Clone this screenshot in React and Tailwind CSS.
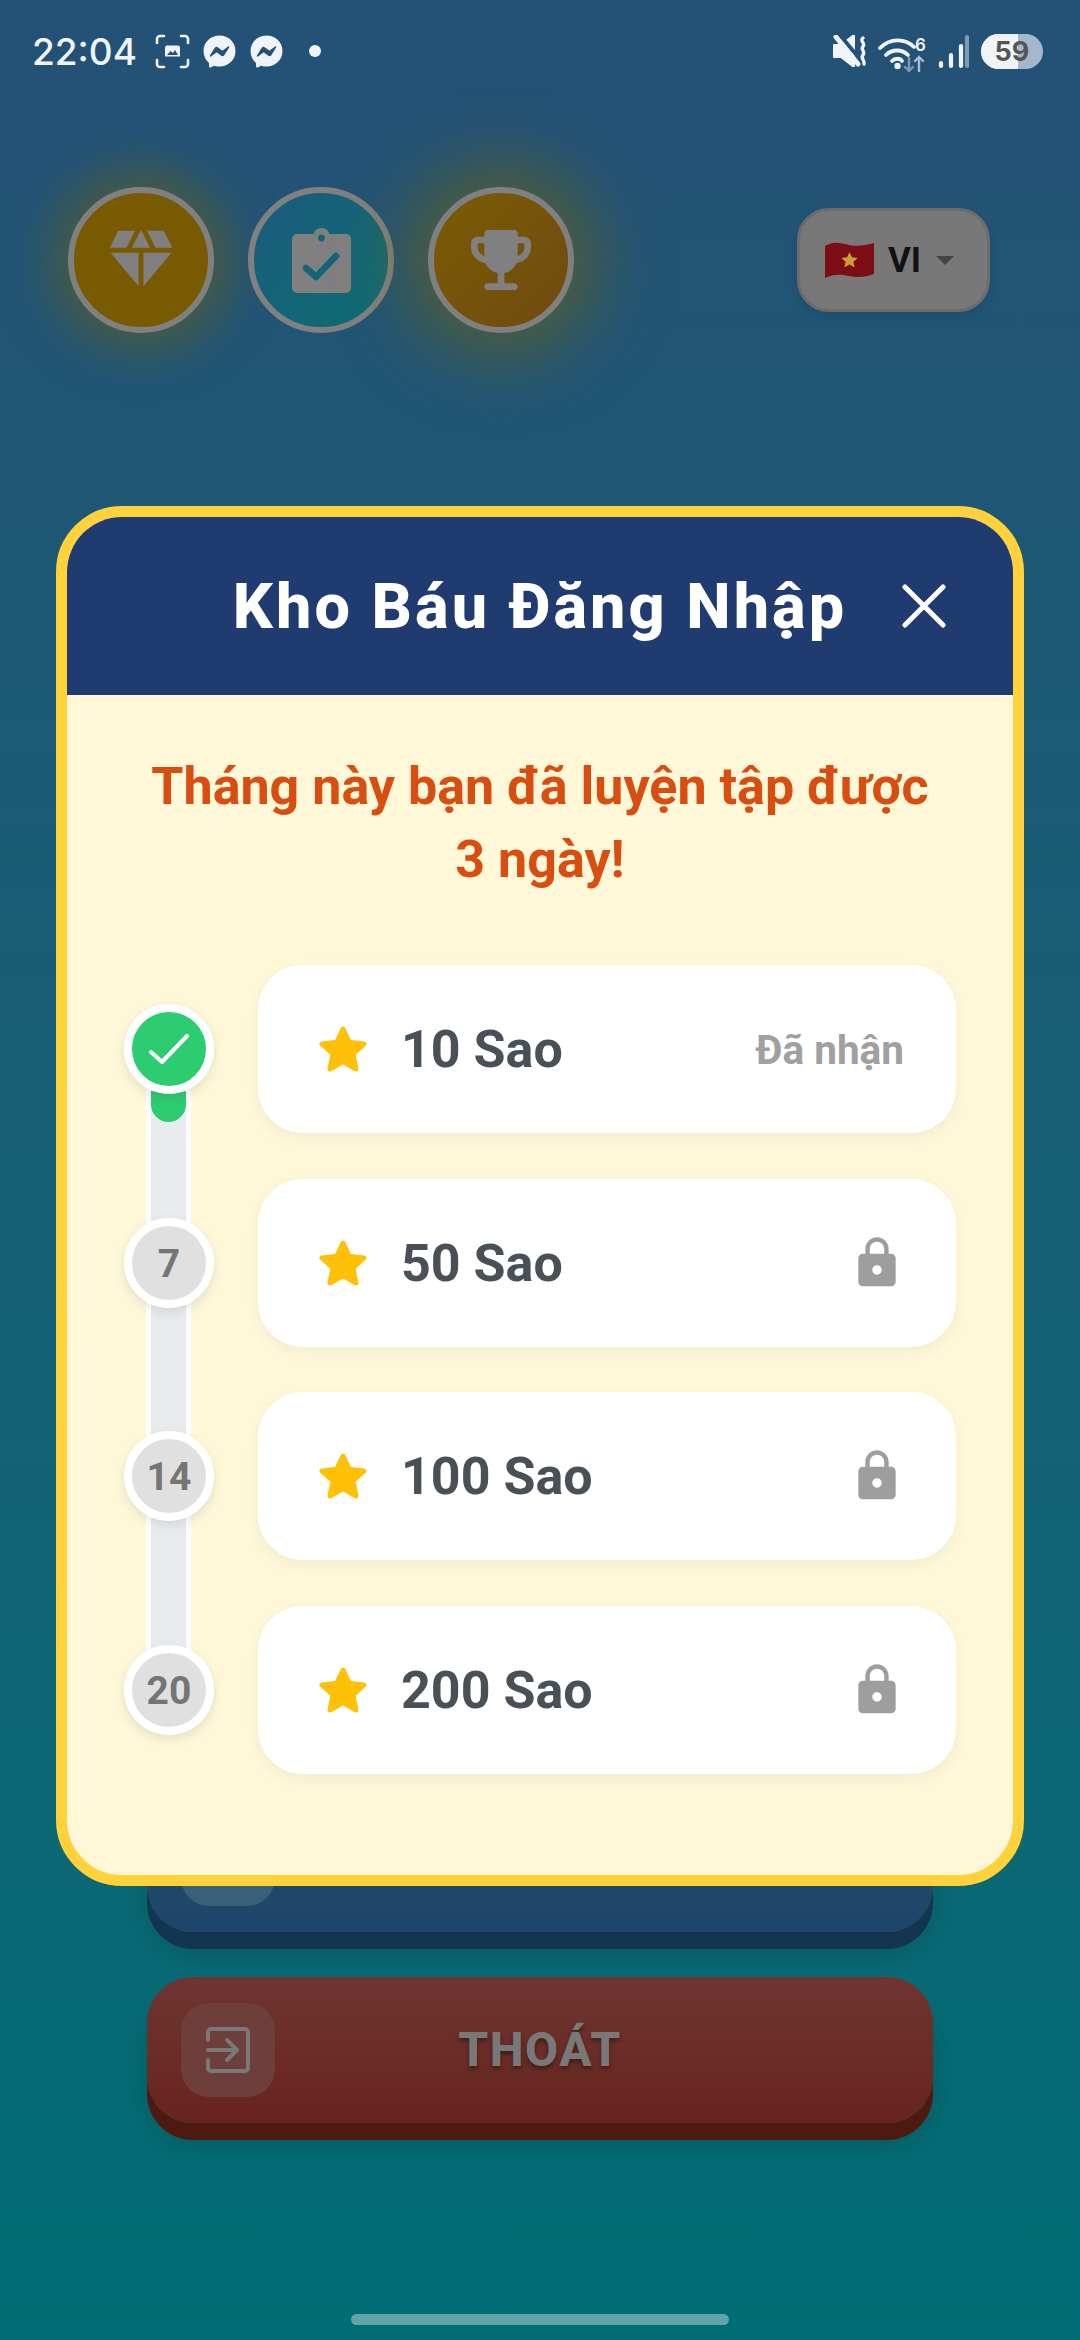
import React from "react";
import { FaFacebookMessenger } from "react-icons/fa";

const FONT = "font-[family-name:Roboto,sans-serif]";

function Mi({ d, size, className }) {
  return (
    <svg viewBox="0 0 24 24" width={size} height={size} className={className} fill="currentColor">
      <path d={d} />
    </svg>
  );
}

const DIAMOND = "M12.16 3h-.32L9.21 8.25h5.58zm4.3 5.25h5.16L19 3h-5.16zm4.92 1.5h-8.63V20.1zM11.25 20.1V9.75H2.62zM7.54 8.25 10.16 3H5L2.38 8.25z";
const TROPHY = "M19 5h-2V4c0-.55-.45-1-1-1H8c-.55 0-1 .45-1 1v1H5c-1.1 0-2 .9-2 2v1c0 2.55 1.92 4.63 4.39 4.94.63 1.5 1.98 2.63 3.61 2.96V19H8c-.55 0-1 .45-1 1s.45 1 1 1h8c.55 0 1-.45 1-1s-.45-1-1-1h-3v-3.1c1.63-.33 2.98-1.46 3.61-2.96C19.08 12.63 21 10.55 21 8V7c0-1.1-.9-2-2-2zM5 8V7h2v3.82C5.84 10.4 5 9.3 5 8zm14 0c0 1.3-.84 2.4-2 2.82V7h2v1z";
const LOCK = "M18 8h-1V6c0-2.76-2.24-5-5-5S7 3.24 7 6v2H6c-1.1 0-2 .9-2 2v10c0 1.1.9 2 2 2h12c1.1 0 2-.9 2-2V10c0-1.1-.9-2-2-2zm-6 9c-1.1 0-2-.9-2-2s.9-2 2-2 2 .9 2 2-.9 2-2 2zm3.1-9H8.9V6c0-1.71 1.39-3.1 3.1-3.1 1.71 0 3.1 1.39 3.1 3.1v2z";

function Clipboard() {
  return (
    <svg viewBox="0 0 59 65" width="59" height="65">
      <mask id="clip-cut">
        <rect width="59" height="65" fill="white" />
        <circle cx="29.5" cy="10" r="3.4" fill="black" />
        <path d="M14 40 L24 49 L44 28" fill="none" stroke="black" strokeWidth="6.5" strokeLinecap="round" strokeLinejoin="round" />
      </mask>
      <g mask="url(#clip-cut)" fill="#808080">
        <circle cx="29.5" cy="8" r="8" />
        <rect x="0" y="6" width="59" height="59" rx="5" />
      </g>
    </svg>
  );
}

function Star() {
  return (
    <svg viewBox="0 0 48 46" width="48" height="46" className="shrink-0">
      <path
        d="M24 3 L30.2 16.2 L45 18 L34 28 L37 43 L24 35.6 L11 43 L14 28 L3 18 L17.8 16.2 Z"
        fill="#ffc107"
        stroke="#ffc107"
        strokeWidth="5"
        strokeLinejoin="round"
      />
    </svg>
  );
}

function StatusLeft() {
  return (
    <div className="flex items-center text-[#f0f4f8]">
      <span className="text-[37px] font-medium leading-none font-[family-name:Inter,sans-serif]">22:04</span>
      <svg viewBox="0 0 35 35" width="35" height="35" className="ml-[18px]" fill="none" stroke="#f0f4f8" strokeWidth="2.6" strokeLinecap="round">
        <path d="M2 9V5a3 3 0 0 1 3-3h4M26 2h4a3 3 0 0 1 3 3v4M33 26v4a3 3 0 0 1-3 3h-4M9 33H5a3 3 0 0 1-3-3v-4" />
        <path d="M10 13.5a2 2 0 0 1 2-2h11a2 2 0 0 1 2 2v9h-15z" fill="#f0f4f8" stroke="none" />
        <path d="M12 21l3.5-4 2.5 2 2-3 3 5z" fill="#25507a" stroke="none" />
      </svg>
      <FaFacebookMessenger className="ml-[13px]" size={33} />
      <FaFacebookMessenger className="ml-[14px]" size={33} />
      <span className="ml-[26px] h-[12px] w-[12px] rounded-full bg-[#f0f4f8]" />
    </div>
  );
}

function StatusRight() {
  return (
    <div className="flex items-center">
      <svg viewBox="0 0 35 32" width="35" height="32" fill="none">
        <path d="M1 10h7L21 0v32L8 22H1z" fill="#f0f4f8" stroke="#f0f4f8" strokeWidth="2" strokeLinejoin="round" />
        <path d="M6 -1l20 24" stroke="#25507a" strokeWidth="4" />
        <path d="M3 2l22 27" stroke="#f0f4f8" strokeWidth="5" strokeLinecap="round" />
        <path d="M30 3c-4 3 3 5 0 8.500c-3 3 3 5 0 8.500c-3 3 2 5 1 9" stroke="#f0f4f8" strokeWidth="3.400" strokeLinecap="round" />
      </svg>
      <svg viewBox="0 -4 49 40" width="49" height="40" className="ml-[10px] mt-[4px]" fill="none" strokeLinecap="round">
        <path d="M2 11C12 1 27 1 36 10" stroke="#f0f4f8" strokeWidth="3.800" />
        <path d="M8 18c6-6 16-6 22 0" stroke="#f0f4f8" strokeWidth="3.800" />
        <path d="M14 24c3-3 8-3 10 0" stroke="#f0f4f8" strokeWidth="3.800" />
        <circle cx="19.500" cy="29" r="3.200" fill="#f0f4f8" />
        <text x="37" y="14" fontSize="17" fontWeight="600" fill="#f0f4f8" fontFamily="Inter, sans-serif">6</text>
        <path d="M31 21v13M27 30l4 4 4-4" stroke="#7d99b3" strokeWidth="2.400" />
        <path d="M41 34V20M37 24l4-4 4 4" stroke="#a9bdd0" strokeWidth="2.400" />
      </svg>
      <svg viewBox="0 0 31 35" width="31" height="35" className="ml-[11px]" strokeLinecap="round" fill="none" strokeWidth="4.200">
        <path d="M3 29v3M13 21v11M23 12v20" stroke="#f0f4f8" />
        <path d="M29 3v29" stroke="#7d99b3" />
      </svg>
      <div className="relative ml-[12px] flex h-[35px] w-[62px] items-center justify-center overflow-hidden rounded-full bg-[#a5b8cb]">
        <div className="absolute inset-y-0 left-0 w-[37px] bg-[#f0f4f8]" />
        <span className="relative text-[27px] font-bold leading-none text-[#555] font-[family-name:Inter,sans-serif]">59</span>
      </div>
    </div>
  );
}

function Flag() {
  return (
    <svg viewBox="0 0 49 36" width="49" height="36">
      <path d="M0 4C9 -1 15 1 24 3C33 5 41 3 49 1V32C41 35 33 36 24 34C15 32 8 32 0 36Z" fill="#7c0d14" />
      <path d="M24.500 10l2.400 5.300 5.800.6-4.300 3.900 1.200 5.700-5.100-2.900-5.100 2.900 1.200-5.700-4.300-3.900 5.800-.6z" fill="#c8a032" />
    </svg>
  );
}

function TopButton({ className, glow, children }) {
  return (
    <div className={`flex h-[146px] w-[146px] items-center justify-center rounded-full border-[6px] border-[#808080] ${className} ${glow}`}>
      {children}
    </div>
  );
}

function MenuButton({ main, lip, iconBg, children }) {
  return (
    <div className={`relative flex h-[146px] items-center rounded-[46px] px-[34px] ${main} ${lip}`}>
      <div className={`flex h-[94px] w-[94px] items-center justify-center rounded-[28px] ${iconBg}`}>{children}</div>
    </div>
  );
}

function Row({ amount, right }) {
  return (
    <div className="flex h-[168px] flex-1 items-center rounded-[45px] bg-white pl-[61px] pr-[52px] shadow-[0_5px_15px_rgba(0,0,0,0.05)]">
      <Star />
      <span className="ml-[34px] pt-[2px] text-[52px] font-bold leading-none text-[#495057]">{amount}</span>
      <div className="ml-auto flex items-center">{right}</div>
    </div>
  );
}

function Node({ done, label }) {
  return (
    <div
      className={`relative z-10 flex h-[90px] w-[90px] shrink-0 items-center justify-center rounded-full border-[8px] border-white shadow-[0_4px_12px_rgba(0,0,0,0.1)] ${done ? "bg-[#2ecc71]" : "bg-[#e0e0e0]"}`}
    >
      {done ? (
        <svg viewBox="0 0 40 30" width="40" height="30" fill="none" stroke="#fff" strokeWidth="4" strokeLinecap="round" strokeLinejoin="round">
          <path d="M2 18 L13 28 L38 2" />
        </svg>
      ) : (
        <span className="pt-[3px] text-[39px] font-bold leading-none text-[#757575]">{label}</span>
      )}
    </div>
  );
}

const lock = <Mi d={LOCK} size={56} className="text-[#9e9e9e] mr-[-1px]" />;

const rows = [
  { done: true, amount: "10 Sao", right: <span className="pt-[2px] text-[40.500px] font-bold leading-none text-[#a0a0a0]">Đã nhận</span> },
  { label: "7", amount: "50 Sao", right: lock },
  { label: "14", amount: "100 Sao", right: lock },
  { label: "20", amount: "200 Sao", right: lock },
];

export default function App() {
  return (
    <div className={`relative flex h-[2340px] w-[1080px] flex-col overflow-hidden bg-linear-to-b from-[#245176] via-[#155f74] to-[#006e74] ${FONT}`}>
      <div className="flex h-[102px] shrink-0 items-center justify-between pl-[32px] pr-[37px]">
        <StatusLeft />
        <StatusRight />
      </div>

      <div className="mt-[85px] flex items-center justify-between pl-[68px] pr-[90px]">
        <div className="flex gap-[34px]">
          <TopButton className="bg-[#785a02]" glow="shadow-[0_0_50px_14px_rgba(125,100,0,0.5)]">
            <Mi d={DIAMOND} size={78} className="text-[#808080]" />
          </TopButton>
          <TopButton className="bg-linear-to-br from-[#1a5b7e] to-[#0d6d70]" glow="">
            <Clipboard />
          </TopButton>
          <TopButton className="bg-linear-to-br from-[#7a5c02] to-[#704a10]" glow="shadow-[0_0_70px_22px_rgba(125,100,0,0.55)]">
            <Mi d={TROPHY} size={80} className="text-[#808080]" />
          </TopButton>
        </div>
        <div className="flex h-[104px] w-[193px] items-center rounded-[32px] border-[3px] border-[#6c6c6c] bg-[#787878] pl-[25px] shadow-[0_3px_8px_rgba(0,0,0,0.12)]">
          <Flag />
          <span className="ml-[14px] text-[35px] font-bold leading-none text-[#111]">VI</span>
          <svg viewBox="0 0 18 9" width="18" height="9" className="ml-[15px]"><path d="M0 0h18l-9 9z" fill="#444" /></svg>
        </div>
      </div>

      <div className="mt-auto flex flex-col gap-[45px] px-[147px]">
        <MenuButton
          main="bg-linear-to-b from-[#235070] to-[#1d4569]"
          lip="shadow-[0_17px_0_#13354f,0_22px_24px_rgba(0,0,0,0.15)]"
          iconBg="bg-[#3a5f78]"
        />
        <div className="relative">
          <MenuButton
            main="bg-linear-to-b from-[#6e3530] to-[#68241e]"
            lip="shadow-[0_17px_0_#4d1a12,0_22px_24px_rgba(0,0,0,0.15)]"
            iconBg="bg-[#6e3f3a]"
          >
            <svg viewBox="0 0 44 46" width="44" height="46" fill="none" stroke="#787878" strokeWidth="4" strokeLinecap="round" strokeLinejoin="round">
              <path d="M2 13V5a3 3 0 0 1 3-3h34a3 3 0 0 1 3 3v36a3 3 0 0 1-3 3H5a3 3 0 0 1-3-3v-8" />
              <path d="M2 23h29M21 13l10 10-10 10" />
            </svg>
          </MenuButton>
          <span className="absolute inset-0 flex items-center justify-center text-[48px] font-extrabold tracking-[1.5px] text-[#787878] [text-shadow:0_3px_4px_rgba(0,0,0,0.4)]">
            THOÁT
          </span>
        </div>
      </div>

      <div className="mb-[15px] mt-[191px] flex justify-center">
        <div className="h-[11px] w-[378px] rounded-full bg-[#62a5a8]" />
      </div>

      {/* modal */}
      <div className="absolute left-[56px] top-[506px] w-[968px] overflow-hidden rounded-[66px] border-[11px] border-[#ffd23c] bg-[#fef8d9]">
        <div className="relative flex h-[178px] items-center justify-center bg-[#1f3b70]">
          <span className="text-[63px] font-extrabold leading-none tracking-[3px] text-white">Kho Báu Đăng Nhập</span>
          <svg viewBox="0 0 44 44" width="44" height="44" className="absolute right-[67px] top-[67px]" fill="none" stroke="#fff" strokeWidth="5" strokeLinecap="round">
            <path d="M3 3l38 38M41 3L3 41" />
          </svg>
        </div>
        <div className="px-[57px] pb-[101px] pt-[55px]">
          <p className="text-center text-[52px] font-bold leading-[73px] text-[#d84e10]">
            Tháng này bạn đã luyện tập được
            <br />3 ngày!
          </p>
          <div className="relative mt-[69px] flex flex-col gap-[45.500px]">
            <div className="absolute bottom-[84px] left-[22px] top-[84px] w-[45px] border-x-[5px] border-white bg-[#e9ecef]">
              <div className="h-[73px] rounded-b-[18px] bg-[#2ecc71]" />
            </div>
            {rows.map((r) => (
              <div key={r.amount} className="flex items-center gap-[44px]">
                <Node done={r.done} label={r.label} />
                <Row amount={r.amount} right={r.right} />
              </div>
            ))}
          </div>
        </div>
      </div>
    </div>
  );
}
